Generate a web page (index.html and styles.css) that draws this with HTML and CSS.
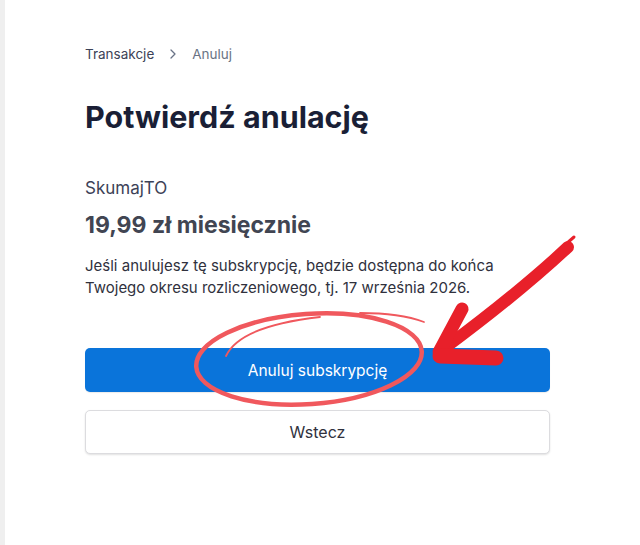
FILE: index.html
```html
<!DOCTYPE html>
<html lang="pl">
<head>
<meta charset="utf-8">
<title>Potwierdź anulację</title>
<link rel="stylesheet" href="styles.css">
</head>
<body>
<div class="page">
  <main class="content">
    <nav class="crumbs">
      <span class="crumb-link">Transakcje</span>
      <svg class="chev" viewBox="0 0 12 12" width="12" height="12"><path d="M4 2l4 4-4 4" fill="none" stroke="#697386" stroke-width="1.3" stroke-linecap="round" stroke-linejoin="round"/></svg>
      <span class="crumb-current">Anuluj</span>
    </nav>
    <h1 class="title">Potwierdź anulację</h1>
    <div class="product">SkumajTO</div>
    <div class="price">19,99 zł miesięcznie</div>
    <p class="note">Jeśli anulujesz tę subskrypcję, będzie dostępna do końca Twojego okresu rozliczeniowego, tj. 17 września 2026.</p>
    <div class="actions">
      <button class="btn btn-primary">Anuluj subskrypcję</button>
      <button class="btn btn-secondary">Wstecz</button>
    </div>
  </main>
  <svg class="marks" viewBox="0 0 640 545" width="640" height="545">
    <g fill="none" stroke="#f0585d" stroke-linecap="round">
      <ellipse cx="309" cy="359" rx="113" ry="45" transform="rotate(-4 309 359)" stroke-width="4.5"/>
      <path d="M226 356 Q240 326 320 317" stroke-width="1.8"/>
      <path d="M360 313 Q400 313 424 322" stroke-width="1.8"/>
    </g>
    <g fill="none" stroke="#e8202a" stroke-linecap="round" stroke-linejoin="round">
      <path d="M568 247 Q520 292 442 350" stroke-width="12"/>
      <path d="M566 244 L574 237" stroke-width="3"/>
      <path d="M439 352 L462 309" stroke-width="13"/>
      <path d="M440 356 L496 358" stroke-width="15"/>
    </g>
  </svg>
</div>
</body>
</html>
```
FILE: styles.css
```css
html, body {
  margin: 0;
  padding: 0;
  background: #ffffff;
}
body {
  font-family: Inter, "Noto Sans", "Liberation Sans", sans-serif;
  -webkit-font-smoothing: antialiased;
}
.page {
  position: relative;
  width: 640px;
  height: 545px;
  box-sizing: border-box;
  border-left: 5px solid #efefef;
  overflow: hidden;
}
.content {
  padding: 44px 0 0 80px;
  width: 465px;
}
.crumbs {
  display: flex;
  align-items: center;
  gap: 13px;
  height: 20px;
  font-size: 13.5px;
  line-height: 20px;
}
.crumb-link { color: #3c4257; }
.crumb-current { color: #6a7383; }
.chev { display: block; }
.title {
  margin: 35px 0 0;
  font-size: 30.5px;
  line-height: 36px;
  font-weight: 700;
  color: #1a1f36;
}
.product {
  margin-top: 41px;
  font-size: 17px;
  line-height: 24px;
  color: #3c4257;
}
.price {
  margin-top: 11px;
  font-size: 23px;
  line-height: 28px;
  font-weight: 700;
  color: #414552;
}
.note {
  margin: 16px 0 0;
  font-size: 15px;
  line-height: 22px;
  color: #30313d;
}
.actions {
  margin-top: 49px;
  display: flex;
  flex-direction: column;
  gap: 18px;
}
.btn {
  display: block;
  width: 100%;
  height: 44px;
  border-radius: 5px;
  font-family: inherit;
  font-weight: 400;
  cursor: pointer;
}
.btn-primary {
  background: #0a74da;
  color: #ffffff;
  border: none;
  font-size: 15.5px;
  box-shadow: 0 1px 1px rgba(0,0,0,0.08);
}
.btn-secondary {
  background: #ffffff;
  color: #30313d;
  border: 1px solid #dcdcdf;
  font-size: 16px;
  box-shadow: 0 1px 2px rgba(0,0,0,0.12);
}
.marks {
  position: absolute;
  left: -5px;
  top: 0;
  pointer-events: none;
}
```
